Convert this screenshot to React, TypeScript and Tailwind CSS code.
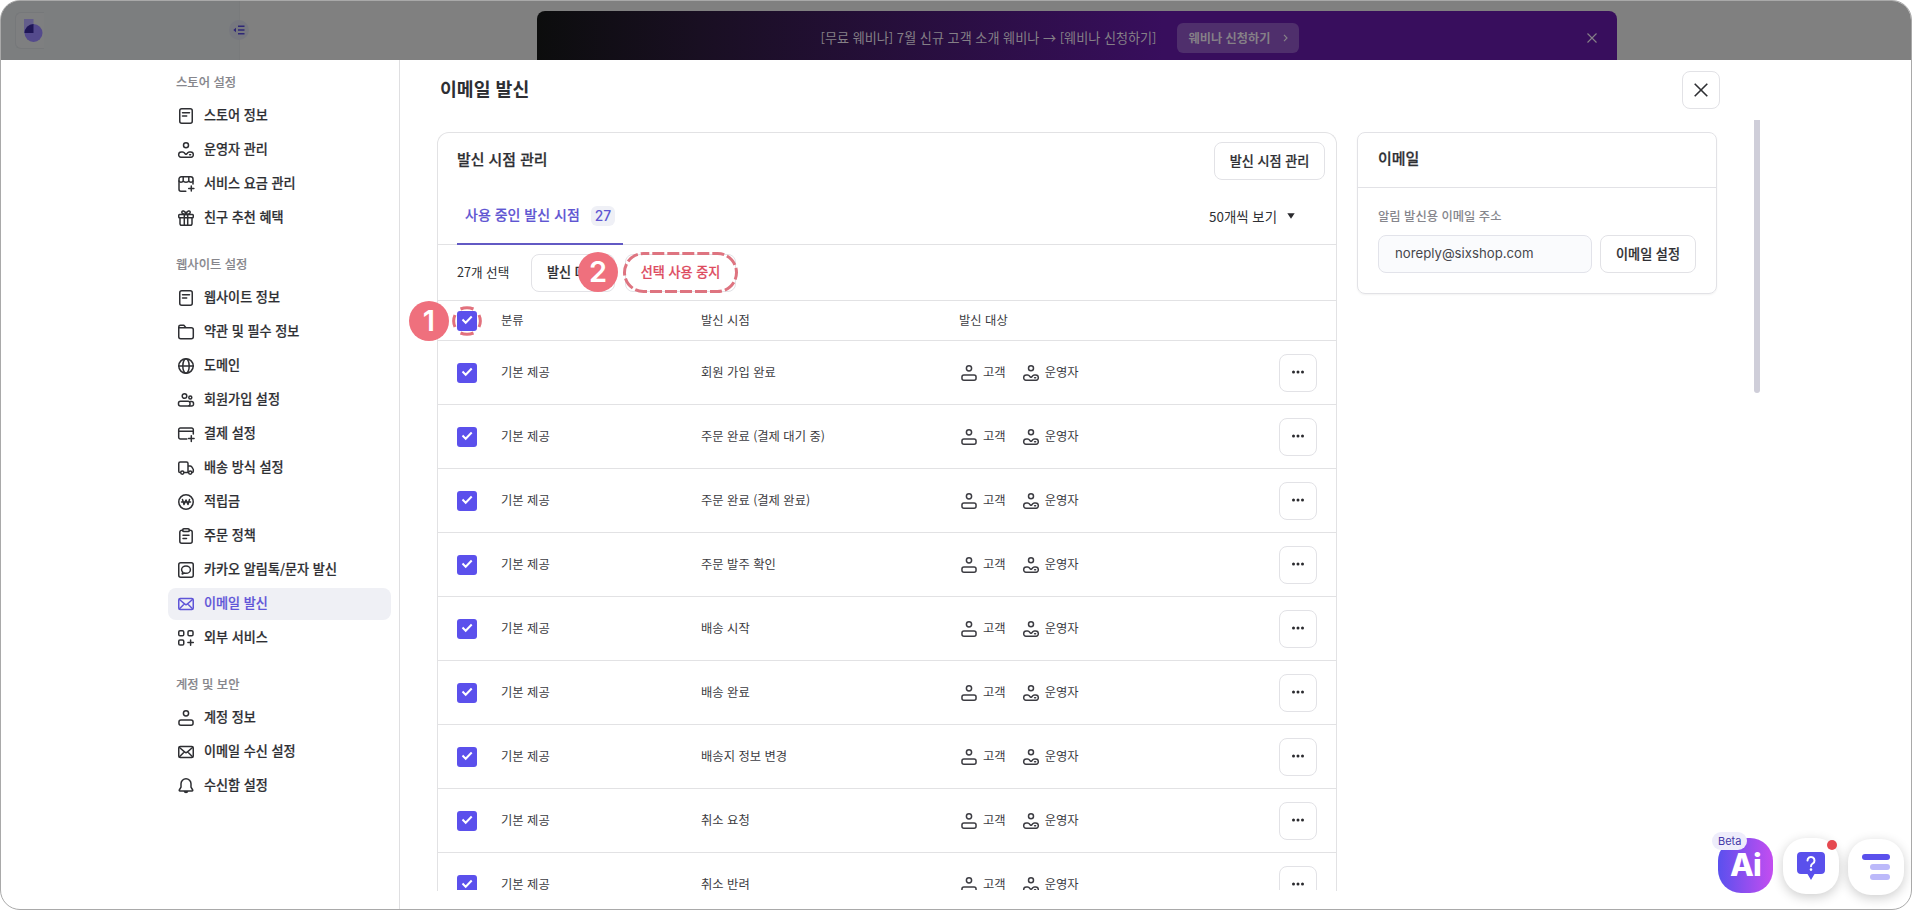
import type { ReactNode } from "react";
import clsx from "clsx";

type IconName =
  | "doc"
  | "operator"
  | "store"
  | "gift"
  | "folder"
  | "globe"
  | "members"
  | "card"
  | "truck"
  | "won"
  | "clipboard"
  | "kakao"
  | "mail"
  | "apps"
  | "user"
  | "bell";

const ICONS: Record<IconName, ReactNode> = {
  doc: (
    <>
      <rect x="1.75" y="0.75" width="12.5" height="14.5" rx="2" />
      <path d="M4.5 4.8h7M4.5 7.9h4.2" />
    </>
  ),
  operator: (
    <>
      <circle cx="8" cy="3.3" r="2.5" />
      <path d="M3.3 10h1.300c.5 0 1 .2 1.400.5L7.300 11.900c.4.4 1 .4 1.400 0L10 10.500c.4-.3.9-.5 1.400-.5h1.300a2.600 2.600 0 0 1 2.600 2.600v.5a2.100 2.100 0 0 1-2.100 2.100H2.800a2.100 2.100 0 0 1-2.100-2.100v-.5A2.600 2.600 0 0 1 3.300 10z" />
      <path d="M11.600 12.700h1" />
    </>
  ),
  store: (
    <>
      <path d="M7.800 15.250H3a2 2 0 0 1-2-2V3a2.250 2.250 0 0 1 2.250-2.250h9.500A2.250 2.250 0 0 1 15 3v5" />
      <path d="M1 5c.5 1.700 3.500 1.700 4 0M5.300 5c.5 1.700 4.900 1.700 5.400 0M11 5c.5 1.700 3.500 1.700 4 0M5.200 1v4M10.800 1v4M13.300 9.900v5.200M10.700 12.500h5.200" />
    </>
  ),
  gift: (
    <>
      <rect x="0.75" y="4.500" width="14.500" height="3.300" rx=".8" />
      <path d="M2 7.800v6a1.500 1.500 0 0 0 1.500 1.500h9a1.500 1.500 0 0 0 1.500-1.500v-6M6.300 4.500v10.700M9.700 4.500v10.700M8 4.500C6.500 4.500 3.800 4 3.800 2.300 3.800.3 7.300.3 8 4.500 8.700.3 12.200.3 12.200 2.300 12.200 4 9.500 4.500 8 4.500z" />
    </>
  ),
  folder: (
    <path d="M.75 4.500V3a1.700 1.700 0 0 1 1.700-1.700h3.400L8 3.800h5.300a2 2 0 0 1 2 2v7a2 2 0 0 1-2 2H2.750a2 2 0 0 1-2-2V4.300M.9 3.800H8" />
  ),
  globe: (
    <>
      <circle cx="8" cy="8" r="7.250" />
      <ellipse cx="8" cy="8" rx="3.200" ry="7.250" />
      <path d="M.75 8h14.500" />
    </>
  ),
  members: (
    <>
      <circle cx="6.500" cy="4" r="2.300" />
      <circle cx="12.300" cy="5.600" r="1.500" />
      <rect x="0.500" y="9.300" width="11.500" height="4.700" rx="2" />
      <path d="M12.200 9.600h1.300a2 2 0 0 1 2 2v.6a1.800 1.800 0 0 1-1.800 1.800H11" />
    </>
  ),
  card: (
    <>
      <path d="M8.800 13H2.400A1.700 1.700 0 0 1 .7 11.300V3.700A1.700 1.700 0 0 1 2.400 2h11.200a1.700 1.700 0 0 1 1.700 1.700V8" />
      <path d="M.7 5.200h14.600M13.300 9.800v5.600M10.500 12.600h5.600" />
    </>
  ),
  truck: (
    <>
      <path d="M2.300 12.500H2A1.300 1.300 0 0 1 .75 11.200V3.500A1.500 1.500 0 0 1 2.250 2H8.500A1.500 1.500 0 0 1 10 3.500v9H6.500M10 6h2.300c.5 0 1 .3 1.300.7l1.300 1.900c.3.400.4.800.4 1.200v1.500c0 .7-.5 1.200-1.200 1.200" />
      <circle cx="4.300" cy="12.600" r="1.600" />
      <circle cx="12.200" cy="12.600" r="1.600" />
    </>
  ),
  won: (
    <>
      <circle cx="8" cy="8" r="7.250" />
      <path d="M4.500 5.500 6 10.500 8 6l2 4.500 1.500-5M3.500 8h9" />
    </>
  ),
  clipboard: (
    <>
      <path d="M4.700 2.200h-.9a2 2 0 0 0-2 2v9a2 2 0 0 0 2 2h8.400a2 2 0 0 0 2-2v-9a2 2 0 0 0-2-2h-.9" />
      <rect x="4.700" y=".7" width="6.600" height="2.900" rx="1.200" />
      <path d="M5 7.300h6M5 10.600h3.500" />
    </>
  ),
  kakao: (
    <>
      <rect x=".75" y=".75" width="14.500" height="14.500" rx="2" />
      <path d="M8 4.100c2.500 0 4.400 1.600 4.400 3.600S10.500 11.300 8 11.300c-.6 0-1.200-.1-1.700-.3l-2.100 1 .5-2C4 9.400 3.600 8.600 3.600 7.700c0-2 1.900-3.600 4.400-3.600z" />
    </>
  ),
  mail: (
    <>
      <rect x=".75" y="2.500" width="14.500" height="11" rx="1.500" />
      <path d="m1.500 3.500 5.300 4.600c.7.6 1.700.6 2.400 0l5.300-4.600M1.500 12.700l4-4M14.500 12.700l-4-4" />
    </>
  ),
  apps: (
    <>
      <rect x=".75" y=".75" width="5" height="5" rx="1.300" />
      <rect x="10" y=".75" width="5" height="5" rx="1.300" />
      <rect x=".75" y="10" width="5" height="5" rx="1.300" />
      <path d="M12.600 9.900v5.400M9.900 12.600h5.400" />
    </>
  ),
  user: (
    <>
      <circle cx="8" cy="3.300" r="2.600" />
      <rect x=".95" y="10" width="14.100" height="5.250" rx="2" />
    </>
  ),
  bell: (
    <path d="M8 .75a5 5 0 0 0-5 5v3.400L1.300 12c-.2.500 0 1 .6 1h12.200c.6 0 .8-.5.6-1L13 9.150v-3.400a5 5 0 0 0-5-5zM6.200 13.200a1.900 1.900 0 0 0 3.600 0" />
  ),
};

function Icon({ name }: { name: IconName }) {
  return (
    <svg
      width="16"
      height="16"
      viewBox="0 0 16 16"
      fill="none"
      stroke="currentColor"
      strokeWidth="1.5"
      strokeLinecap="round"
      strokeLinejoin="round"
      className="shrink-0 overflow-visible"
    >
      {ICONS[name]}
    </svg>
  );
}

type NavItem = { icon: IconName; label: string; active?: boolean };

const NAV_GROUPS: { title: string; items: NavItem[] }[] = [
  {
    title: "스토어 설정",
    items: [
      { icon: "doc", label: "스토어 정보" },
      { icon: "operator", label: "운영자 관리" },
      { icon: "store", label: "서비스 요금 관리" },
      { icon: "gift", label: "친구 추천 혜택" },
    ],
  },
  {
    title: "웹사이트 설정",
    items: [
      { icon: "doc", label: "웹사이트 정보" },
      { icon: "folder", label: "약관 및 필수 정보" },
      { icon: "globe", label: "도메인" },
      { icon: "members", label: "회원가입 설정" },
      { icon: "card", label: "결제 설정" },
      { icon: "truck", label: "배송 방식 설정" },
      { icon: "won", label: "적립금" },
      { icon: "clipboard", label: "주문 정책" },
      { icon: "kakao", label: "카카오 알림톡/문자 발신" },
      { icon: "mail", label: "이메일 발신", active: true },
      { icon: "apps", label: "외부 서비스" },
    ],
  },
  {
    title: "계정 및 보안",
    items: [
      { icon: "user", label: "계정 정보" },
      { icon: "mail", label: "이메일 수신 설정" },
      { icon: "bell", label: "수신함 설정" },
    ],
  },
];

const ROWS = [
  "회원 가입 완료",
  "주문 완료 (결제 대기 중)",
  "주문 완료 (결제 완료)",
  "주문 발주 확인",
  "배송 시작",
  "배송 완료",
  "배송지 정보 변경",
  "취소 요청",
  "취소 반려",
];

function Checkbox() {
  return (
    <span className="flex size-5 shrink-0 items-center justify-center rounded-[3px] bg-[#5b50ec]">
      <svg width="12" height="10" viewBox="0 0 12 10" fill="none" stroke="#fff" strokeWidth="2" className="-mt-0.5">
        <path d="m1.500 4.500 3.200 3.200L10.700 1.500" />
      </svg>
    </span>
  );
}

function CloseIcon({ size }: { size: number }) {
  return (
    <svg width={size} height={size} viewBox="0 0 14 14" stroke="currentColor" strokeWidth="1.6">
      <path d="M.7.7 13.300 13.300M13.300.7.7 13.300" />
    </svg>
  );
}

function TopBar() {
  return (
    <div className="flex h-[59px] shrink-0 overflow-hidden bg-[#808080]">
      <div className="relative w-[239px] border-r border-[#797b7c] bg-[#7c7e7f]">
        <div className="ml-[14px] mt-[11px] h-[37px] w-[29px] rounded-l-md border border-r-0 border-[#76787a] bg-[#7e7f80] pl-2 pt-1.5">
          <svg width="19" height="23" viewBox="0 0 19 23">
            <rect width="9.500" height="14" fill="#635d8b" />
            <circle cx="9.500" cy="14" r="9" fill="#544a8c" />
            <path d="M9.500 5v9H.5a9 9 0 0 1 9-9z" fill="#1f1656" />
          </svg>
        </div>
        <div className="absolute -right-[10px] top-[19px] flex size-5 items-center justify-center rounded-full bg-[#77787f]">
          <svg width="12" height="10" viewBox="0 0 12 10" fill="none" stroke="#2f2776" strokeWidth="1.400">
            <path d="M5 1.200h6.500M5 5h6.500M5 8.800h6.500" />
            <path d="M3 2.800v4.400L.3 5z" fill="#2f2776" stroke="none" />
          </svg>
        </div>
      </div>
      <div className="ml-[297px] mt-[10px] flex h-14 w-[1080px] shrink-0 items-start rounded-lg bg-[linear-gradient(90deg,#0c0d0d_0%,#190f22_15%,#380e5d_58%)] text-[#858087]">
        <div className="flex flex-1 items-center justify-center gap-5 pr-[5px] pt-[12px]">
          <span className="text-[13.100px]">[무료 웨비나] 7월 신규 고객 소개 웨비나 → [웨비나 신청하기]</span>
          <button className="flex h-[30px] w-[122px] items-center justify-between rounded-md bg-[#4f2f6c] pl-3 pr-[11px] text-[12.200px] font-bold">
            웨비나 신청하기
            <svg width="5" height="8" viewBox="0 0 5 8" fill="none" stroke="currentColor" strokeWidth="1.200">
              <path d="m1 .8 3 3.200-3 3.200" />
            </svg>
          </button>
        </div>
        <div className="mr-5 mt-[22px]">
          <CloseIcon size={10} />
        </div>
      </div>
    </div>
  );
}

function Sidebar() {
  return (
    <nav className="w-[399px] shrink-0 border-r border-[#dfdfe1] pl-[167px] pr-2 pt-[7.500px]">
      {NAV_GROUPS.map((group) => (
        <div key={group.title} className="mb-4">
          <h3 className="h-8 pl-2 text-[12.300px] font-medium leading-[29px] text-[#86868c] [-webkit-text-stroke:0.150px]">
            {group.title}
          </h3>
          <ul className="flex flex-col gap-0.5">
            {group.items.map((item) => (
              <li
                key={item.label}
                className={clsx(
                  "flex h-8 items-center gap-[10px] rounded-lg pl-[10px] text-[13.100px] font-medium",
                  item.active ? "bg-[#eff0f5] text-[#5f55d8]" : "text-[#2e2f33]"
                )}
              >
                <Icon name={item.icon} />
                <span className="-mt-0.5 [-webkit-text-stroke:0.200px]">{item.label}</span>
              </li>
            ))}
          </ul>
        </div>
      ))}
    </nav>
  );
}

function OutlineButton({ className, children }: { className?: string; children: ReactNode }) {
  return (
    <button
      className={clsx(
        "flex h-[38px] shrink-0 items-center justify-center rounded-lg border border-[#e2e2e6] bg-white pb-px text-[13.100px] font-medium [-webkit-text-stroke:0.200px]",
        className
      )}
    >
      {children}
    </button>
  );
}

function StepBadge({ className, children }: { className: string; children: ReactNode }) {
  return (
    <span
      className={clsx(
        "absolute flex size-10 items-center justify-center rounded-full bg-[#ef707d] font-[Inter] text-[29px] font-semibold text-white",
        className
      )}
    >
      {children}
    </span>
  );
}

function TimingCard() {
  return (
    <section className="h-[759px] w-[900px] shrink-0">
      <div className="h-full rounded-t-xl border border-b-0 border-[#e2e2e4]">
        <div className="flex h-14 items-center justify-between pl-[19px] pr-[11px]">
          <h2 className="-mt-[3px] text-[14.900px] font-medium [-webkit-text-stroke:0.250px]">발신 시점 관리</h2>
          <OutlineButton className="w-[111px]">발신 시점 관리</OutlineButton>
        </div>
        <div className="flex h-14 items-start justify-between border-b border-[#e2e2e4] pl-[19px] pr-[41px]">
          <div className="flex h-14 w-[166px] items-start gap-[11px] border-b-2 border-[#6259c4] pl-2 pt-[15px] text-[#6055d2]">
            <span className="text-[14px] font-medium leading-5 [-webkit-text-stroke:0.150px]">사용 중인 발신 시점</span>
            <span className="mt-0.5 rounded-md bg-[#eff0f6] px-1 font-[Inter] text-[13.800px] font-medium leading-5">27</span>
          </div>
          <div className="flex items-center gap-[10px] pt-[17px] text-[13.400px]">
            <span>50개씩 보기</span>
            <svg width="8" height="6" viewBox="0 0 8 6" fill="#2a2a2e">
              <path d="M.3.3h7.400L4 5.700z" />
            </svg>
          </div>
        </div>
        <div className="relative flex h-14 items-center border-b border-[#e2e2e4] pl-[19px] text-[12.600px]">
          <span className="w-[74px]">27개 선택</span>
          <OutlineButton className="w-[84px]">발신 대상</OutlineButton>
          <StepBadge className="left-[140px] top-[7px]">2</StepBadge>
          <div className="relative ml-[10px]">
            <OutlineButton className="w-[111px] text-[#dd4c5f]">선택 사용 중지</OutlineButton>
            <svg className="absolute -left-[2px] -top-[2px]" width="115" height="41" fill="none">
              <rect x="1.500" y="1.500" width="112" height="38" rx="19" stroke="#de7480" strokeWidth="3" strokeDasharray="12 3" strokeDashoffset="6.200" />
            </svg>
          </div>
        </div>
        <div className="relative flex h-10 items-center border-b border-[#e2e2e4] pl-[19px] text-[12.300px] text-[#3c3c42]">
          <StepBadge className="-left-[29px] top-0">1</StepBadge>
          <svg className="absolute left-[14px] top-[5px]" width="30" height="30" fill="none" stroke="#e2717d" strokeWidth="3">
            <path d="M8.500 3Q15 .3 21.500 3M8.500 27Q15 29.700 21.500 27M3 9Q.3 15 3 21M27 9Q29.700 15 27 21" />
          </svg>
          <span className="relative">
            <Checkbox />
          </span>
          <span className="w-[200px] pl-6">분류</span>
          <span className="w-[258px] pl-6">발신 시점</span>
          <span className="pl-6">발신 대상</span>
        </div>
        <div className="h-[549px] overflow-hidden">
          {ROWS.map((row) => (
            <div key={row} className="flex h-16 items-center border-b border-[#e2e2e4] pl-[19px] pr-[19px] text-[12.300px] text-[#3c3c42]">
              <Checkbox />
              <span className="w-[200px] pl-6">기본 제공</span>
              <span className="w-[260px] pl-6">{row}</span>
              <span className="flex flex-1 items-center gap-[17px] pl-6">
                <span className="flex items-center gap-1.5">
                  <Icon name="user" />
                  고객
                </span>
                <span className="flex items-center gap-1.5">
                  <Icon name="operator" />
                  운영자
                </span>
              </span>
              <OutlineButton className="w-[38px]">
                <svg width="12" height="4" viewBox="0 0 12 4" fill="#2a2a2e">
                  <circle cx="1.500" cy="2" r="1.500" />
                  <circle cx="6" cy="2" r="1.500" />
                  <circle cx="10.500" cy="2" r="1.500" />
                </svg>
              </OutlineButton>
            </div>
          ))}
        </div>
      </div>
    </section>
  );
}

function EmailCard() {
  return (
    <section className="h-[162px] w-[360px] rounded-lg border border-[#e2e2e6] shadow-[0_1px_2px_rgba(0,0,0,0.05)]">
      <h2 className="flex h-[55px] items-center border-b border-[#e2e2e6] pb-[3px] pl-5 text-[15px] font-medium [-webkit-text-stroke:0.250px]">
        이메일
      </h2>
      <div className="px-5 pt-[18px]">
        <p className="text-[12.300px] font-medium leading-5 text-[#86868c]">알림 발신용 이메일 주소</p>
        <div className="mt-[9px] flex gap-2">
          <div className="flex h-[38px] w-[214px] items-center rounded-lg border border-[#e2e3ea] bg-[#fafbfd] pb-px pl-4 font-[Inter,'Noto_Sans_CJK_KR',sans-serif] text-[13.200px] text-[#47474d]">
            noreply@sixshop.com
          </div>
          <OutlineButton className="w-[96px]">이메일 설정</OutlineButton>
        </div>
      </div>
    </section>
  );
}

function FloatingButtons() {
  return (
    <div className="absolute bottom-[14px] right-[7px] flex items-center gap-[9.500px]">
      <div className="relative -mt-1 flex size-[55px] items-center justify-center rounded-[23px] bg-[linear-gradient(90deg,#5a50ee,#c44df0)] font-[Inter] text-[31px] font-extrabold tracking-tight text-white">
        Ai
        <span className="absolute -left-[6px] -top-[6px] rounded-full bg-[#eeedfb] px-[6px] text-[11px] font-normal leading-[18px] tracking-normal text-[#4438a8]">
          Beta
        </span>
      </div>
      <div className="relative -mt-0.5 flex size-14 items-center justify-center rounded-[23px] bg-white shadow-[0_3px_12px_rgba(0,0,0,0.2)]">
        <svg width="28" height="28" viewBox="0 0 28 28">
          <path d="M4 0h20a4 4 0 0 1 4 4v14a4 4 0 0 1-4 4h-6.500L14 28l-3.500-6H4a4 4 0 0 1-4-4V4a4 4 0 0 1 4-4z" fill="#5a50ec" />
          <path d="M10.500 8.500a3.500 3.500 0 1 1 5.300 3c-1.200.7-1.800 1.300-1.800 2.700" fill="none" stroke="#fff" strokeWidth="2" strokeLinecap="round" />
          <circle cx="14" cy="17.600" r="1.300" fill="#fff" />
        </svg>
        <span className="absolute right-[2px] top-[2px] size-[10px] rounded-full bg-[#e5484f]" />
      </div>
      <div className="flex size-14 flex-col items-end justify-center gap-1 rounded-[23px] bg-white pr-[14px] shadow-[0_3px_12px_rgba(0,0,0,0.2)]">
        <span className="h-1.5 w-7 rounded-full bg-[#5a50ec]" />
        <span className="h-1.5 w-5 rounded-full bg-[#bcb9fa]" />
        <span className="h-1.5 w-5 rounded-full bg-[#bcb9fa]" />
      </div>
    </div>
  );
}

export default function App() {
  return (
    <div
      lang="ko"
      className="relative flex h-[910px] w-[1912px] flex-col overflow-hidden rounded-[20px] border border-[#a9a9a9] bg-white font-['Noto_Sans_CJK_KR',sans-serif] text-[#2e2f33]"
    >
      <TopBar />
      <div className="flex min-h-0 flex-1">
        <Sidebar />
        <main className="flex flex-1 flex-col">
          <div className="flex h-[72px] shrink-0 items-start justify-between pl-[40px] pr-[191px] pt-[11px]">
            <h1 className="text-[18.300px] font-bold leading-[34px]">이메일 발신</h1>
            <OutlineButton className="w-[38px]">
              <CloseIcon size={14} />
            </OutlineButton>
          </div>
          <div className="flex pl-[37px]">
            <TimingCard />
            <div className="w-5" />
            <EmailCard />
            <div className="-mt-3 ml-[37px] h-[273px] w-1.5 rounded-b-full bg-[#cfced9]" />
          </div>
        </main>
      </div>
      <FloatingButtons />
    </div>
  );
}
